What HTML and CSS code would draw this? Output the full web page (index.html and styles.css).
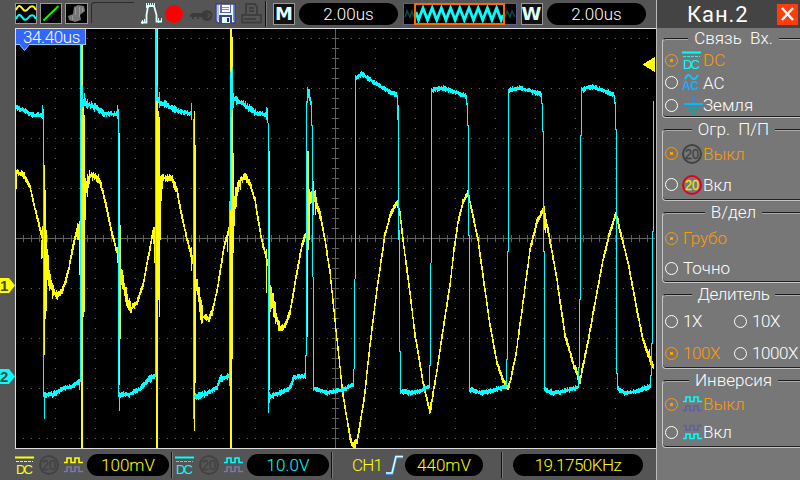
FILE: index.html
```html
<!DOCTYPE html>
<html lang="ru">
<head>
  <meta charset="UTF-8">
  <meta name="viewport" content="width=device-width, initial-scale=1.0">
  <title>Осциллограф</title>
  <link rel="stylesheet" href="styles.css">
</head>
<body>
  <svg class="defs" width="0" height="0">
    <symbol id="dc" viewBox="0 0 19 18" overflow="visible">
      <path d="M0 1.5H19" stroke="currentColor" stroke-width="2"/>
      <path d="M1 5.5H18" stroke="currentColor" stroke-dasharray="3 1"/>
      <text x="1" y="17.5" textLength="17" class="dc-text">DC</text>
    </symbol>
    <symbol id="bw" viewBox="0 0 20 20">
      <circle cx="10" cy="10" r="9" class="ring"/>
      <text x="3" y="15" textLength="14" lengthAdjust="spacingAndGlyphs" class="bw-text">20</text>
    </symbol>
    <symbol id="sq" viewBox="0 0 19 7">
      <path d="M0 5.5H3V1H7V5.5H11V1H15V5.5H19" fill="none" stroke="currentColor" stroke-width="1.6"/>
    </symbol>
  </svg>

  <div class="device">
    <div class="main">
      <div class="topbar">
        <svg class="tool" width="22" height="21" viewBox="0 0 22 21">
          <rect x=".5" y=".5" width="21" height="20" fill="#000" stroke="#999"/>
          <path d="M1 7Q4 0 7 5T13 6T19 4L21 7" fill="none" stroke="#ff0" stroke-width="2"/>
          <path d="M1 16Q4 9 7 14T13 15T19 13L21 16" fill="none" stroke="#0ff" stroke-width="2"/>
        </svg>
        <svg class="tool" width="22" height="21" viewBox="0 0 22 21">
          <rect x=".5" y=".5" width="21" height="20" fill="#000" stroke="#999"/>
          <path d="M3.500 17.500L18.500 3" stroke="#0f0" stroke-width="1.8"/>
        </svg>
        <svg class="tool" width="23" height="21" viewBox="0 0 23 21">
          <rect x=".5" y=".5" width="22" height="20" fill="#000" stroke="#999"/>
          <path d="M9 4L13 2L19 3L20 8L15 12L16 17L10 19L4 17L3 13L8 11Z" fill="#777"/>
          <path d="M10.500 5V12M14.500 4V14M7.500 13V17M17.500 5V9" stroke="#999"/>
        </svg>
        <div class="bracket"></div>
        <svg class="pulse" width="22" height="21" viewBox="0 0 22 21" fill="none" stroke="#dff">
          <path d="M0 19.500H5.500V12L7 3H13L15.500 12V18.500H21" stroke-width="1.800"/>
          <path d="M1.500 17V21M3.500 16V20M5.500 0V5M7.500 0V5M9.500 0V4M11.500 0V4M13.500 0V5M17.500 15V20M20.500 15V18"/>
        </svg>
        <span class="rec"></span>
        <svg class="key" width="23" height="13" viewBox="0 0 23 13">
          <path d="M0 6L3 4H12V8H9V10H7V8H4V10H2V8H0Z" fill="#3c3c3c"/>
          <circle cx="17" cy="6.500" r="5.500" fill="#3c3c3c"/>
          <path d="M18 4.500L20 6.500L18 8.500" fill="none" stroke="#666"/>
        </svg>
        <svg class="disk" width="21" height="21" viewBox="0 0 21 21">
          <path d="M1 1H20V20H3L1 18Z" fill="#dff" stroke="#3c3c9c" stroke-width="1.500"/>
          <path d="M3 2V18M18.500 2V18" stroke="#88a"/>
          <rect x="5" y="1" width="11" height="9" fill="#66a"/>
          <rect x="7" y="2" width="8" height="7" fill="#fff"/>
          <path d="M7 4.500H14M7 6.500H14" stroke="#88b"/>
          <rect x="4" y="12" width="13" height="8" fill="#448"/>
          <rect x="7" y="14" width="8" height="6" fill="#dff"/>
          <rect x="12" y="15" width="2" height="4" fill="#226"/>
        </svg>
        <svg class="printer" width="21" height="21" viewBox="0 0 21 21" fill="none" stroke="#3f3f3f" stroke-width="2">
          <path d="M5 11V1H14L16 4V11M8 5H13M8 8H13M1 12H20V19.500H1ZM3 16H15"/>
        </svg>
        <span class="sep"></span>
        <span class="letter m">M</span>
        <span class="pill time">2.00us</span>
        <svg class="preview" width="114" height="22" viewBox="0 0 114 22">
          <rect x=".5" y=".5" width="113" height="21" fill="#000" stroke="#5d5d91"/>
          <path d="M2 14L4 8L7 14L9 8L11 14M102 14L104 8L107 14L109 8L112 14" fill="none" stroke="#064c4c" stroke-width="1.500"/>
          <path id="previewWave" fill="none" stroke="#0ff" stroke-width="2.800"/>
          <rect x="12" y="1" width="89" height="20" fill="none" stroke="#ff6a00" stroke-width="2"/>
        </svg>
        <span class="letter w">W</span>
        <span class="pill time">2.00us</span>
      </div>

      <div class="middle">
        <div class="gutter">
          <svg class="mark ch1" width="16" height="15" viewBox="0 0 16 15">
            <path d="M0 0H10L16 7.500L10 15H0Z" fill="#ff0"/><text x="1" y="13">1</text>
          </svg>
          <svg class="mark ch2" width="16" height="15" viewBox="0 0 16 15">
            <path d="M0 0H10L16 7.500L10 15H0Z" fill="#0ff"/><text x="1" y="13">2</text>
          </svg>
        </div>
        <div class="scope">
          <svg id="screen" width="640" height="419" viewBox="16 29 640 419" shape-rendering="crispEdges">
            <path id="grid" stroke="#606060"/>
            <path id="yellow" stroke="#ff0"/>
            <path id="cyan" stroke="#0ff"/>
            <path d="M655 57V72L643 65V64Z" fill="#ff0"/>
          </svg>
          <div class="offset">34.40us</div>
          <svg class="pointer" width="13" height="8" viewBox="0 0 13 8">
            <path d="M1 0L6.500 6.500L12 0" fill="#36f" stroke="#8cf"/>
          </svg>
        </div>
      </div>

      <div class="bottombar">
        <svg class="dc yellow"><use href="#dc"/></svg>
        <svg class="bw off"><use href="#bw"/></svg>
        <span class="inv yellow"><svg><use href="#sq"/></svg><svg class="ghost"><use href="#sq"/></svg></span>
        <span class="pill volts yellow">100mV</span>
        <span class="sep"></span>
        <svg class="dc cyan"><use href="#dc"/></svg>
        <svg class="bw off"><use href="#bw"/></svg>
        <span class="inv cyan"><svg><use href="#sq"/></svg><svg class="ghost"><use href="#sq"/></svg></span>
        <span class="pill volts cyan">10.0V</span>
        <span class="sep"></span>
        <span class="source yellow">CH1</span>
        <svg class="edge" width="19" height="20" viewBox="0 0 19 20" fill="none">
          <path d="M1 18.500H7L11 2H18" stroke="#48c" stroke-width="3"/>
          <path d="M1 18H7L11 1.500H18" stroke="#dff" stroke-width="1.500"/>
        </svg>
        <span class="pill level yellow">440mV</span>
        <span class="sep last"></span>
        <span class="pill freq yellow">19.1750KHz</span>
      </div>
    </div>

    <div class="panel">
      <div class="title">
        <span>Кан.2</span>
        <svg class="close" width="21" height="21" viewBox="0 0 21 21">
          <rect width="21" height="21" fill="#ff3c0a"/>
          <path d="M5 4L16 16M16 4L5 16" stroke="#fff" stroke-width="2.500"/>
        </svg>
      </div>

      <div class="group coupling">
        <h3>Связь&nbsp; Вх.</h3>
        <div class="option on"><i class="radio"></i><svg class="dc blue"><use href="#dc"/></svg><span>DC</span></div>
        <div class="option"><i class="radio"></i>
          <svg class="ac" width="19" height="18" viewBox="0 0 19 18">
            <path d="M3 5Q6 -2 9 3T16 1" fill="none" stroke="#0cf" stroke-width="2"/>
            <text x="0" y="16" textLength="17">AC</text>
          </svg>
          <span>AC</span></div>
        <div class="option"><i class="radio"></i>
          <svg class="ground" width="20" height="18" viewBox="0 0 20 18">
            <path d="M10.500 0V8" stroke="#1d8fff" stroke-width="2"/>
            <path d="M1 8H20" stroke="#0bf" stroke-width="2"/>
            <path d="M5 12.500H16M9 16.500H12" stroke="#0aa" stroke-width="2"/>
          </svg>
          <span>Земля</span></div>
      </div>

      <div class="group limit">
        <h3>Огр.&nbsp; П/П</h3>
        <div class="option on"><i class="radio"></i><svg class="bw dark"><use href="#bw"/></svg><span>Выкл</span></div>
        <div class="option"><i class="radio"></i><svg class="bw red"><use href="#bw"/></svg><span>Вкл</span></div>
      </div>

      <div class="group scale">
        <h3>В/дел</h3>
        <div class="option on"><i class="radio"></i><span>Грубо</span></div>
        <div class="option"><i class="radio"></i><span>Точно</span></div>
      </div>

      <div class="group probe">
        <h3>Делитель</h3>
        <div class="option"><i class="radio"></i><span>1X</span></div>
        <div class="option"><i class="radio"></i><span>10X</span></div>
        <div class="option on"><i class="radio"></i><span>100X</span></div>
        <div class="option"><i class="radio"></i><span>1000X</span></div>
      </div>

      <div class="group invert">
        <h3>Инверсия</h3>
        <div class="option on"><i class="radio"></i><span class="inv cyan"><svg><use href="#sq"/></svg><svg class="ghost"><use href="#sq"/></svg></span><span>Выкл</span></div>
        <div class="option"><i class="radio"></i><span class="inv cyan flip"><svg class="ghost"><use href="#sq"/></svg><svg><use href="#sq"/></svg></span><span>Вкл</span></div>
      </div>
    </div>
  </div>
  <script src="script.js"></script>
</body>
</html>
```
FILE: styles.css
```css
* {
  box-sizing: border-box;
}
body {
  margin: 0;
  background: #555;
  color: #fff;
  font-family: Roboto, "Liberation Sans", sans-serif;
  font-weight: 300;
  font-size: 17px;
  overflow: hidden;
}
svg {
  display: block;
  flex: none;
  overflow: visible;
}
.defs {
  display: none;
}
.device {
  display: flex;
  width: 800px;
  height: 480px;
}
.main {
  width: 656px;
  display: flex;
  flex-direction: column;
}

/* top bar */
.topbar {
  height: 28px;
  padding: 3px 0 0 15px;
  display: flex;
  align-items: flex-start;
}
.tool {
  margin-right: 3px;
}
.bracket {
  width: 43px;
  height: 21px;
  margin-top: -1px;
  border-left: 1px solid #2c2c2c;
  border-top: 1px solid #2c2c2c;
  border-top-left-radius: 4px;
}
.pulse {
  margin-left: 7px;
}
.rec {
  width: 18px;
  height: 18px;
  margin: 2px 7px 0 2px;
  border-radius: 50%;
  background: #f00;
}
.key {
  margin-top: 6px;
}
.disk {
  margin-left: 2px;
}
.printer {
  margin-left: 5px;
}
.sep {
  width: 2px;
  height: 26px;
  border-left: 1px solid #111;
  border-right: 1px solid #777;
}
.topbar .sep {
  margin: -2px 6px 0 3px;
}
.letter {
  width: 22px;
  height: 22px;
  border: 1px solid #999;
  background: #111;
  color: #dff;
  font: bold 18px/20px "DejaVu Sans", sans-serif;
  text-align: center;
}
.letter.w {
  margin-left: 4px;
  text-indent: -1px;
}
.pill {
  height: 22px;
  border-radius: 11px;
  background: #000;
  line-height: 22px;
  text-align: center;
  white-space: nowrap;
}
.time {
  width: 99px;
  margin-left: 4px;
}
.preview {
  margin-left: 5px;
}

/* screen */
.middle {
  display: flex;
  height: 421px;
}
.gutter {
  position: relative;
  width: 15px;
}
.mark {
  position: absolute;
  left: -1px;
}
.mark text {
  font: bold 15px "Liberation Sans", sans-serif;
  fill: #444;
}
.ch1 {
  top: 250px;
}
.ch2 {
  top: 341px;
}
.scope {
  position: relative;
  width: 641px;
  border: 1px solid #ddd;
  border-right: 0;
  background: #000;
}
#screen {
  overflow: hidden;
}
.offset {
  position: absolute;
  left: 0;
  top: 0;
  width: 70px;
  height: 16px;
  padding-left: 7px;
  border-right: 1px solid #8cf;
  border-bottom: 1px solid #8cf;
  background: #36f;
  line-height: 16px;
  letter-spacing: -.4px;
}
.pointer {
  position: absolute;
  left: 2px;
  top: 15px;
}

/* bottom bar */
.bottombar {
  height: 31px;
  padding-left: 15px;
  display: flex;
  align-items: center;
}
.yellow {
  color: #ff0;
}
.cyan {
  color: #0ff;
}
.dc {
  width: 19px;
  height: 18px;
}
.dc.blue {
  color: #0ff;
}
.dc-text {
  font: 13px "Liberation Sans", sans-serif;
  fill: currentColor;
}
.bw {
  width: 20px;
  height: 20px;
  margin-left: 5px;
}
.bw-text {
  font: 15px "Liberation Sans", sans-serif;
  fill: currentColor;
  stroke: currentColor;
  stroke-width: .4px;
}
.ring {
  fill: none;
  stroke: var(--ring, currentColor);
  stroke-width: 2px;
}
.bw.off,
.bw.dark {
  color: #424242;
}
.bw.red {
  --ring: #e00020;
  color: #e2e22c;
}
.inv {
  width: 19px;
  margin: 0 4px 0 5px;
  display: flex;
  flex-direction: column;
  gap: 2px;
}
.inv svg {
  width: 19px;
  height: 7px;
}
.inv .ghost {
  color: #7878aa;
}
.volts {
  width: 82px;
}
.bottombar .sep {
  margin: 0 2px;
}
.source {
  margin-left: 17px;
  width: 32px;
  letter-spacing: -.8px;
}
.edge {
  margin-left: 1px;
}
.level {
  width: 78px;
  margin-left: 1px;
}
.bottombar .last {
  margin: 0 10px 0 18px;
}
.freq {
  width: 130px;
  letter-spacing: -.5px;
}

/* right panel */
.panel {
  width: 144px;
  border-left: 1px solid #bbb;
  background: #777;
  overflow: hidden;
}
.title {
  height: 28px;
  padding: 0 2px 0 30px;
  display: flex;
  align-items: center;
  justify-content: space-between;
  background: #444;
  font-size: 22px;
  font-weight: 400;
  letter-spacing: .9px;
}
.group {
  margin-left: 5px;
  border-left: 1px solid #c4c4c4;
  border-bottom: 1px solid #c4c4c4;
  border-top: 1px solid #1c1c1c;
  border-radius: 4px 0 0 4px;
  box-shadow: inset 0 1px #aaa, inset 0 -1px #222;
}
.group h3 {
  position: relative;
  left: 2px;
  width: max-content;
  height: 20px;
  margin: -11px auto 0;
  padding: 0 6px;
  background: #777;
  font-size: 17px;
  font-weight: 300;
  line-height: 20px;
}
.option {
  display: flex;
  align-items: center;
  padding-left: 2px;
  white-space: nowrap;
}
.on {
  color: #ff9a00;
}
.radio {
  position: relative;
  width: 13px;
  height: 13px;
  margin-right: 5px;
  flex: none;
  border: 1px solid currentColor;
  border-radius: 50%;
}
.on .radio::after {
  content: "";
  position: absolute;
  left: 4px;
  top: 4px;
  width: 3px;
  height: 3px;
  background: #ff9a00;
}
.option .dc,
.option .ac {
  margin: 0 2px 0 -1px;
}
.ac text {
  font: bold 12px "Liberation Sans", sans-serif;
  fill: #1da8ff;
}
.option .bw {
  margin: 0 1px 0 -1px;
}
.option .inv {
  margin: 0 1px 0 0;
}
.option .inv.flip .ghost {
  transform: scaleY(-1);
}
.option .inv .ghost {
  color: #6060a0;
}
.coupling {
  height: 80px;
  margin-top: 10px;
}
.group.coupling h3,
.group.scale h3 {
  margin-bottom: 1px;
}
.coupling .option {
  height: 22.500px;
}
.limit {
  height: 72px;
  margin-top: 11px;
}
.group.limit h3 {
  margin-bottom: -1px;
}
.limit .option {
  height: 31px;
}
.scale {
  height: 71px;
  margin-top: 11px;
}
.scale .option {
  height: 30px;
}
.probe {
  height: 75px;
  margin-top: 11px;
  display: grid;
  grid-template-columns: 69px auto;
  grid-template-rows: 10px 32px 32px;
  letter-spacing: -.4px;
}
.probe h3 {
  grid-column: 1 / 3;
}
.invert {
  height: 68px;
  margin-top: 11px;
}
.invert .option {
  height: 28px;
}
```
FILE: script.js
```js
// grid
var d = "";
var x, y;
for (y = 38; y < 448; y += 50) {
  for (x = 23; x < 655; x += 8) {
    d += "M" + x + " " + (y + 0.5) + "h1";
  }
}
for (x = 55; x < 655; x += 40) {
  for (y = 38; y < 448; y += 10) {
    d += "M" + x + " " + (y + 0.5) + "h1";
  }
}
d += "M16 238.5H655M335.5 29V448";
for (x = 23; x < 655; x += 8) {
  d += "M" + (x + 0.5) + " 235v7";
}
for (y = 38; y < 448; y += 10) {
  d += "M332 " + (y + 0.5) + "h7";
}
document.getElementById("grid").setAttribute("d", d);

var seed = 7;
function rnd() {
  seed = (seed * 1103515245 + 12345) % 2147483648;
  return seed / 2147483648;
}

// one run of samples: list of [x, y, noise]
function run(points) {
  var out = "";
  for (var i = 0; i < points.length - 1; i++) {
    var a = points[i], b = points[i + 1];
    var slope = (b[1] - a[1]) / (b[0] - a[0]);
    for (var px = a[0]; px < b[0]; px++) {
      var py = a[1] + slope * (px - a[0]);
      var top = Math.min(py, py + slope) - 1 - rnd() * a[2];
      var bottom = Math.max(py, py + slope) + 1 + rnd() * a[2];
      out += "M" + (px + 0.5) + " " + Math.round(top) + "V" + Math.min(448, Math.round(bottom));
    }
  }
  return out;
}

// vertical strokes: list of [x, y1, y2]
function bars(list) {
  return list.map(function (b) {
    return "M" + (b[0] + 0.5) + " " + b[1] + "V" + b[2];
  }).join("");
}

var cyanRuns = [
  [[16,107,2],[25,111,2],[33,115,2],[42,115,2]],
  [[44,395,3],[55,394,2],[62,389,2],[70,387,2],[79,382,2]],
  [[83,102,4],[87,104,4],[95,107,3],[105,114,2],[118,114,2]],
  [[119,396,3],[130,394,2],[140,389,2],[148,380,3],[155,377,2]],
  [[158,102,4],[165,104,3],[178,111,2],[191,114,2]],
  [[194,397,3],[205,394,2],[217,388,2],[220,378,3],[229,377,2]],
  [[233,98,4],[243,104,3],[256,113,2],[267,115,2]],
  [[269,397,3],[280,393,2],[290,388,2],[294,377,2],[305,376,2]],
  [[314,388,2],[327,393,2],[345,389,2],[353,384,2]],
  [[356,78,2],[362,74,2],[375,83,2],[390,92,2],[397,95,2]],
  [[400,391,2],[410,393,2],[420,391,2],[429,386,2]],
  [[431,91,2],[436,89,2],[443,88,2],[455,92,2],[466,96,2]],
  [[469,389,2],[482,393,2],[495,390,2],[506,386,2]],
  [[508,91,2],[513,89,2],[520,88,2],[530,91,2],[541,94,2]],
  [[544,389,2],[553,393,2],[565,391,2],[578,387,2]],
  [[581,91,2],[586,88,2],[592,87,2],[603,90,2],[614,95,2]],
  [[618,389,2],[625,393,2],[638,391,2],[650,386,2]]
];
var cyanBars = [
  [42,105,119],[43,109,397],[44,393,419],[79,379,390],[80,29,382],
  [81,95,115],[82,85,107],[84,93,106],[117,105,119],[118,109,397],[119,392,411],
  [155,29,377],[156,29,101],[157,85,101],[159,92,108],[191,103,120],[193,119,419],
  [229,201,386],[230,71,210],[231,79,117],[232,67,110],[233,93,108],
  [266,107,120],[267,108,123],[268,123,413],[269,392,403],
  [305,355,379],[306,101,356],[307,87,103],[308,89,98],[309,89,101],[310,97,105],[311,101,126],
  [312,125,277],[313,277,391],[353,369,387],[354,279,369],[355,75,279],
  [397,95,120],[398,105,240],[399,230,352],[400,351,394],
  [429,365,388],[430,263,366],[431,88,263],[466,95,105],[467,103,126],[468,125,236],[469,235,391],
  [506,359,387],[507,251,360],[508,89,252],[541,93,104],[542,103,132],[543,131,252],[544,251,391],
  [578,367,388],[579,299,368],[580,135,300],[581,89,136],[614,95,104],[615,102,130],[616,129,374],[617,373,390],
  [650,375,388],[651,343,376],[652,231,344],[653,101,232]
];
document.getElementById("cyan").setAttribute("d", cyanRuns.map(run).join("") + bars(cyanBars));

var yellowRuns = [
  [[16,173,3],[22,173,3],[25,178,2],[30,187,1],[36,213,2],[43,240,1]],
  [[46,255,12],[50,280,8],[53,290,4],[57,296,3],[62,291,3],[68,273,2],[73,247,2],[77,230,2],[80,224,1]],
  [[85,194,14],[88,183,6],[90,175,4],[98,178,3],[101,185,2],[106,205,2],[112,233,2],[118,256,1]],
  [[121,273,8],[127,299,7],[131,309,3],[137,302,2],[143,285,2],[148,258,2],[153,232,3],[155,228,1]],
  [[159,205,12],[163,178,4],[172,178,4],[177,190,2],[181,212,2],[187,239,2],[193,262,1]],
  [[195,275,12],[200,305,10],[203,317,3],[209,319,3],[213,310,2],[218,285,2],[224,247,2],[229,230,1]],
  [[234,215,12],[237,190,8],[241,180,3],[245,176,3],[250,184,2],[255,200,2],[261,237,2],[268,264,1]],
  [[270,290,12],[277,321,5],[280,328,3],[285,326,3],[290,313,2],[296,278,2],[302,245,2],[306,234,1]],
  [[309,205,6],[312,193,6],[316,202,5],[320,214,2],[325,240,2],[330,272,2],[336,330,2],[343,395,2],[350,437,2],[353,446,3],[357,442,2],[364,400,2],[370,345,2],[377,289,2],[385,235,2],[391,213,2],[397,203,3],[400,213,2],[403,240,2],[409,285,2],[415,335,2],[423,382,2],[430,412,3],[432,400,2],[437,370,2],[443,330,2],[450,285,2],[454,250,2],[458,223,2],[463,202,2],[468,192,3],[470,202,2],[478,240,2],[485,290,2],[490,325,2],[497,363,2],[503,380,2],[508,389,2],[511,378,2],[516,354,2],[522,310,2],[530,250,2],[537,222,2],[543,210,3],[546,221,3],[550,240,2],[557,280,2],[565,335,2],[574,366,3],[580,381,3],[587,347,2],[595,303,2],[603,260,2],[610,232,2],[616,214,3],[620,230,2],[628,262,2],[636,305,2],[643,340,2],[650,359,3],[654,368,1]]
];
var yellowBars = [
  [16,170,189],[41,240,259],[42,226,258],[44,165,355],[45,190,319],[46,230,311],[47,249,280],
  [77,223,240],[78,230,240],[79,227,275],[81,29,448],[82,29,448],[83,107,317],[84,115,312],[85,178,220],
  [117,247,263],[119,133,385],[120,225,339],
  [153,227,244],[154,232,263],[156,101,448],[157,29,448],[158,111,300],[159,117,317],[160,176,240],
  [191,247,271],[194,111,431],[195,145,383],[227,234,252],[230,29,448],[231,29,448],[232,37,359],[233,153,253],
  [266,249,293],[268,265,280],[269,151,390],[270,285,312],[307,151,337],[308,151,250],[309,189,240],[313,181,215],[315,190,215],
  [354,440,448],[355,442,448],[544,206,230],[545,213,233],[649,349,362],[651,351,368]
];
document.getElementById("yellow").setAttribute("d", yellowRuns.map(run).join("") + bars(yellowBars));

// preview thumbnail
var wave = "M13 9L15.5 17";
for (var k = 0; k < 9; k++) {
  wave += "L" + (20 + k * 9.2) + " 5L" + (24.5 + k * 9.2) + " 17";
}
document.getElementById("previewWave").setAttribute("d", wave + "L100 12");
```
